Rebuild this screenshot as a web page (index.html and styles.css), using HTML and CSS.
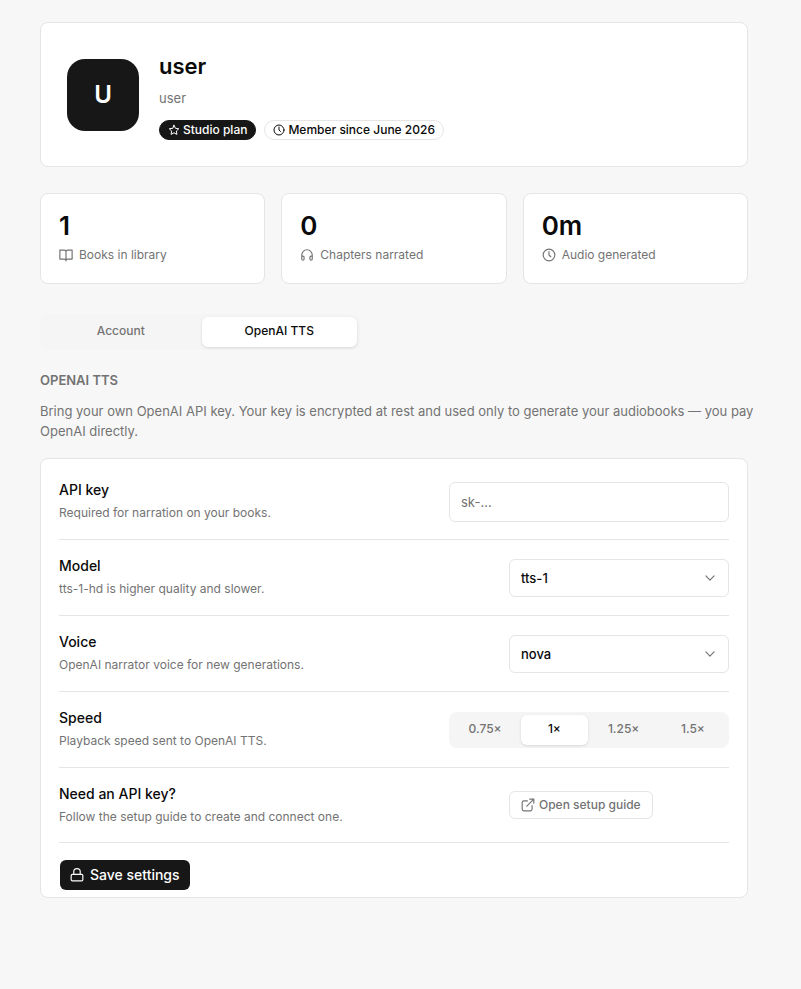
FILE: index.html
```html
<!DOCTYPE html>
<html lang="en">
<head>
    <meta charset="UTF-8">
    <meta name="viewport" content="width=device-width, initial-scale=1.0">
    <title>Profile</title>
    <link rel="stylesheet" href="styles.css">
</head>
<body>
    <main class="page">

        <!-- Profile -->
        <section class="card profile">
            <div class="avatar">U</div>
            <div class="profile-info">
                <h1>user</h1>
                <p>user</p>
                <div class="badges">
                    <span class="badge badge-dark">
                        <svg class="icon" viewBox="0 0 24 24"><path d="M12 2.5l2.9 6.1 6.6.9-4.8 4.6 1.2 6.7L12 17.6l-5.9 3.2 1.2-6.7-4.8-4.6 6.6-.9z"/></svg>
                        Studio plan
                    </span>
                    <span class="badge">
                        <svg class="icon" viewBox="0 0 24 24"><circle cx="12" cy="12" r="10"/><path d="M12 6v6l3 3"/></svg>
                        Member since June 2026
                    </span>
                </div>
            </div>
        </section>

        <!-- Stats -->
        <section class="stats">
            <div class="card stat">
                <strong>1</strong>
                <span>
                    <svg class="icon" viewBox="0 0 24 24"><path d="M12 6v16M1.500 3.500H9a3 3 0 0 1 3 3 3 3 0 0 1 3-3h7.500v15.500H15a3 3 0 0 0-3 3 3 3 0 0 0-3-3H1.500z"/></svg>
                    Books in library
                </span>
            </div>
            <div class="card stat">
                <strong>0</strong>
                <span>
                    <svg class="icon" viewBox="0 0 24 24"><path d="M3 19v-7a9 9 0 0 1 18 0v7M3 14h2a2 2 0 0 1 2 2v3a2 2 0 0 1-2 2 2 2 0 0 1-2-2zM21 14h-2a2 2 0 0 0-2 2v3a2 2 0 0 0 2 2 2 2 0 0 0 2-2z"/></svg>
                    Chapters narrated
                </span>
            </div>
            <div class="card stat">
                <strong>0m</strong>
                <span>
                    <svg class="icon" viewBox="0 0 24 24"><circle cx="12" cy="12" r="10"/><path d="M12 6v6l3 3"/></svg>
                    Audio generated
                </span>
            </div>
        </section>

        <!-- Tabs -->
        <div class="segment tabs" role="tablist">
            <button type="button" role="tab" aria-selected="false">Account</button>
            <button type="button" role="tab" aria-selected="true" class="active">OpenAI TTS</button>
        </div>

        <!-- OpenAI settings -->
        <section class="settings">
            <h2>OPENAI TTS</h2>
            <p class="intro">Bring your own OpenAI API key. Your key is encrypted at rest and used only to generate your audiobooks — you pay OpenAI directly.</p>

            <form class="card panel">
                <div class="row">
                    <div class="row-text">
                        <label for="api-key">API key</label>
                        <p>Required for narration on your books.</p>
                    </div>
                    <input class="field wide" id="api-key" type="text" placeholder="sk-…">
                </div>
                <div class="row">
                    <div class="row-text">
                        <label for="model">Model</label>
                        <p>tts-1-hd is higher quality and slower.</p>
                    </div>
                    <div class="control select">
                        <select class="field" id="model">
                            <option>tts-1</option>
                            <option>tts-1-hd</option>
                        </select>
                        <svg class="icon" viewBox="0 0 24 24"><path d="M5 8.500l7 7 7-7"/></svg>
                    </div>
                </div>
                <div class="row">
                    <div class="row-text">
                        <label for="voice">Voice</label>
                        <p>OpenAI narrator voice for new generations.</p>
                    </div>
                    <div class="control select">
                        <select class="field" id="voice">
                            <option>nova</option>
                        </select>
                        <svg class="icon" viewBox="0 0 24 24"><path d="M5 8.500l7 7 7-7"/></svg>
                    </div>
                </div>
                <div class="row">
                    <div class="row-text">
                        <h3 id="speed">Speed</h3>
                        <p>Playback speed sent to OpenAI TTS.</p>
                    </div>
                    <div class="segment wide" role="group" aria-labelledby="speed">
                        <button type="button">0.75×</button>
                        <button type="button" class="active">1×</button>
                        <button type="button">1.25×</button>
                        <button type="button">1.5×</button>
                    </div>
                </div>
                <div class="row">
                    <div class="row-text">
                        <h3>Need an API key?</h3>
                        <p>Follow the setup guide to create and connect one.</p>
                    </div>
                    <div class="control">
                        <a class="guide" href="#">
                            <svg class="icon" viewBox="0 0 24 24"><path d="M15 2h7v7M22 2L10 14M19 13v6a3 3 0 0 1-3 3H5a3 3 0 0 1-3-3V8a3 3 0 0 1 3-3h6"/></svg>
                            Open setup guide
                        </a>
                    </div>
                </div>
                <button class="save" type="submit">
                    <svg class="icon" viewBox="0 0 24 24"><rect x="2" y="11" width="20" height="11" rx="2"/><path d="M6.500 11V6a5.500 5 0 0 1 11 0v5"/></svg>
                    Save settings
                </button>
            </form>
        </section>

    </main>
</body>
</html>
```
FILE: styles.css
```css
*{
    box-sizing: border-box;
}
body{
    margin: 0;
    background: #f7f7f7;
    color: #0a0a0a;
    font: 13px/20px Inter, "Liberation Sans", sans-serif;
}
h1,h2,h3,p{
    margin: 0;
}
button,input,select{
    font: inherit;
    color: inherit;
}
.page{
    padding: 22px 53px 48px 40px;
}
.card{
    background: #fff;
    border: 1px solid #e5e5e5;
    border-radius: 8px;
}
.icon{
    width: 14px;
    height: 14px;
    flex: none;
    fill: none;
    stroke: currentColor;
    stroke-width: 2;
    stroke-linecap: round;
    stroke-linejoin: round;
}

/* Profile */
.profile{
    display: flex;
    align-items: center;
    gap: 20px;
    padding: 26px;
}
.avatar{
    display: flex;
    align-items: center;
    justify-content: center;
    width: 72px;
    height: 72px;
    border-radius: 18px;
    background: #171717;
    color: #fff;
    font-size: 24px;
    font-weight: 600;
}
.profile-info h1{
    font-size: 22px;
    line-height: 34px;
    font-weight: 600;
}
.profile-info p{
    margin: 5px 0 12px;
    color: #737373;
}
.badges{
    display: flex;
    flex-wrap: wrap;
    gap: 8px;
}
.badge{
    display: flex;
    align-items: center;
    gap: 3px;
    height: 20px;
    padding: 0 8px;
    border: 1px solid #e5e5e5;
    border-radius: 10px;
    font-size: 12px;
    font-weight: 500;
}
.badge .icon{
    width: 12px;
    height: 12px;
}
.badge-dark{
    background: #171717;
    border-color: #171717;
    color: #fff;
}

/* Stats */
.stats{
    display: grid;
    grid-template-columns: repeat(3, 1fr);
    gap: 16px;
    margin: 26px 0 30px;
}
.stat{
    padding: 16px 18px 18px;
}
.stat strong{
    display: block;
    font-size: 26px;
    line-height: 32px;
    font-weight: 600;
}
.stat span{
    display: flex;
    align-items: center;
    gap: 6px;
    margin-top: 3px;
    color: #737373;
    font-size: 12px;
}

/* Segmented buttons */
.segment{
    display: flex;
    gap: 3px;
    padding: 3px;
    border-radius: 8px;
    background: #f5f5f5;
}
.segment button{
    flex: 1;
    height: 30px;
    padding: 0 8px 2px;
    border: 0;
    border-radius: 6px;
    background: none;
    color: #737373;
    font-size: 12px;
    font-weight: 500;
}
.segment .active{
    background: #fff;
    color: #0a0a0a;
    box-shadow: 0 1px 3px rgba(0,0,0,.12);
}
.tabs{
    width: 320px;
}

/* Settings */
.settings h2{
    margin: 20px 0 11px;
    color: #737373;
    font-size: 13px;
    line-height: 20px;
    font-weight: 600;
}
.intro{
    margin: 0 -8px 17px 0;
    color: #737373;
}
.panel{
    padding: 5px 18px 7px;
}
.row{
    display: flex;
    align-items: center;
    justify-content: space-between;
    gap: 20px;
    height: 76px;
    border-bottom: 1px solid #e5e5e5;
}
.row:nth-last-child(2){
    height: 75px;
}
.row-text{
    padding-bottom: 1px;
}
.row-text label,
.row-text h3{
    display: block;
    font-size: 14px;
    line-height: 20px;
    font-weight: 500;
}
.row-text p{
    margin-top: 4px;
    line-height: 18px;
    color: #737373;
    font-size: 12px;
}
.control{
    width: 220px;
}
.wide{
    width: 280px;
}
.field{
    height: 38px;
    padding: 0 11px;
    border: 1px solid #e5e5e5;
    border-radius: 6px;
    background: #fff;
}
input.field{
    height: 40px;
}
.field::placeholder{
    color: #737373;
    opacity: 1;
}
.select{
    position: relative;
}
.select .field{
    display: block;
    width: 100%;
    font-weight: 500;
    appearance: none;
}
.select .icon{
    position: absolute;
    top: 12px;
    right: 12px;
    color: #737373;
    pointer-events: none;
}
.guide,
.save{
    display: flex;
    align-items: center;
    width: fit-content;
    border-radius: 6px;
    font-weight: 500;
    text-decoration: none;
}
.guide{
    gap: 4px;
    height: 28px;
    padding: 0 11px;
    border: 1px solid #e5e5e5;
    color: #737373;
    font-size: 12px;
}
.save{
    gap: 6px;
    height: 30px;
    margin: 17px 0 0 1px;
    padding: 0 10px;
    border: 0;
    background: #171717;
    color: #fff;
    font-size: 14px;
}
```
